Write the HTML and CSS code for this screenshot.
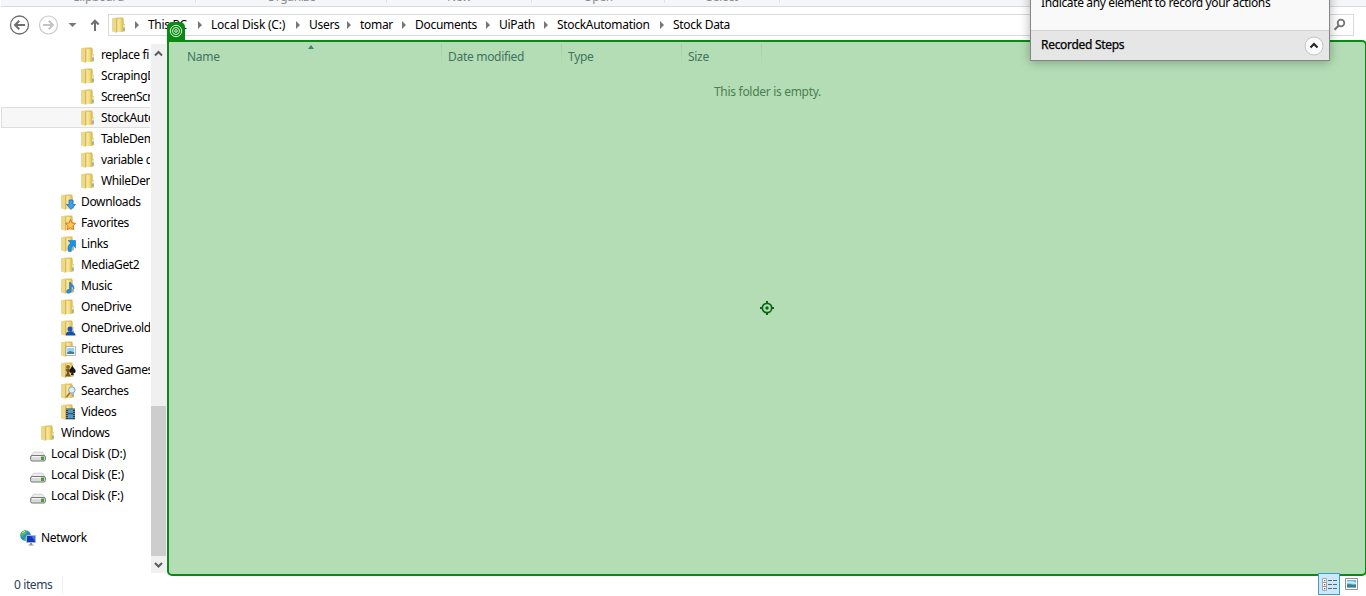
FILE: index.html
```html
<!DOCTYPE html>
<html lang="en">
<head>
<meta charset="utf-8">
<title>Stock Data</title>
<link rel="stylesheet" href="styles.css">
</head>
<body>
<svg class="defs" width="0" height="0">
  <defs>
    <linearGradient id="fg" x1="0" x2="1"><stop offset="0" stop-color="#fbedaa"/><stop offset=".5" stop-color="#f1dc7c"/><stop offset="1" stop-color="#d3b145"/></linearGradient>
    <linearGradient id="fb" x1="0" x2="1"><stop offset="0" stop-color="#f0dc8c"/><stop offset="1" stop-color="#d8ba58"/></linearGradient>
    <symbol id="folder" viewBox="0 0 16 16">
      <path d="M1 1.200 5.500.5H12.300V14.500H1Z" fill="url(#fb)"/>
      <path d="M1 1.500 5 2.200V15.700L1 14.300Z" fill="#ecd88c"/>
      <path d="M5 2.200 6.500 1.500V15L5 15.700Z" fill="#d6b95a"/>
      <path d="M6.500 2H12.500V14.800H6.500Z" fill="url(#fg)"/>
      <path d="M12.500 7h1.300v7.300l-1.300.5z" fill="#dfc670"/>
      <path d="M12.500 10.500h1v3.200h-1z" fill="#49a2d8"/>
      <path d="M12.500 8h1v2.500h-1z" fill="#f5f5ef"/>
    </symbol>
    <symbol id="drive" viewBox="0 0 16 16">
      <path d="M3.500 5.200h9l2.500 4H1Z" fill="#eee" stroke="#c0c0c0" stroke-width=".7"/>
      <rect x=".6" y="8.500" width="14.800" height="5.500" rx="1.500" fill="#d9d9d9" stroke="#777" stroke-width="1"/>
      <path d="M2 9.600h9" stroke="#f8f8f8"/>
      <rect x="11" y="9.700" width="3" height="3.300" fill="#3ca52a"/>
    </symbol>
  </defs>
</svg>
<div class="window">
  <div class="ribbon">
    <span class="g1">Clipboard</span><span class="g2">Organize</span><span class="g3">New</span><span class="g4">Open</span><span class="g5">Select</span>
  </div>
  <div class="toolbar">
    <svg class="navbtns" width="108" height="34" viewBox="0 0 108 34" fill="none">
      <circle cx="19.500" cy="18" r="9" stroke="#6d6d6d" stroke-width="1.300"/>
      <path d="M25 18H15.500M19.300 13.700 15 18l4.300 4.300" stroke="#6d6d6d" stroke-width="2"/>
      <circle cx="48.500" cy="18" r="9" stroke="#c9c9c9" stroke-width="1.200"/>
      <path d="M43 18h9.500M48.700 13.700 53 18l-4.300 4.300" stroke="#c4c4c4" stroke-width="2"/>
      <path d="M68.500 16h8l-4 4z" fill="#777"/>
      <path d="M95 24V14M91.300 17.500 95 13.700l3.700 3.800" stroke="#707070" stroke-width="2"/>
    </svg>
    <div class="address">
      <svg class="ic" width="16" height="16"><use href="#folder"/></svg>
      <div class="crumbs"><span>This PC</span><span class="drv">Local Disk (C:)</span><span>Users</span><span>tomar</span><span>Documents</span><span>UiPath</span><span>StockAutomation</span><span>Stock Data</span></div>
    </div>
    <div class="search"><svg width="14" height="14" viewBox="0 0 14 14" fill="none" stroke="#747474"><circle cx="8" cy="5" r="3.300" stroke-width="1.800"/><path d="M5.700 7.500 1.500 11.700" stroke-width="2"/></svg></div>
  </div>
  <div class="main">
    <div class="tree">
      <div class="row l3"><svg class="ic"><use href="#folder"/></svg><span>replace fi</span></div>
      <div class="row l3"><svg class="ic"><use href="#folder"/></svg><span>ScrapingD</span></div>
      <div class="row l3"><svg class="ic"><use href="#folder"/></svg><span class="tight">ScreenScr</span></div>
      <div class="row l3 sel"><svg class="ic"><use href="#folder"/></svg><span>StockAuto</span></div>
      <div class="row l3"><svg class="ic"><use href="#folder"/></svg><span>TableDem</span></div>
      <div class="row l3"><svg class="ic"><use href="#folder"/></svg><span>variable d</span></div>
      <div class="row l3"><svg class="ic"><use href="#folder"/></svg><span>WhileDem</span></div>
      <div class="row l2"><svg class="ic" viewBox="0 0 16 16"><use href="#folder"/><path d="M9 6h4v4.500h2.500L11 15.500 6.500 10.500H9Z" fill="#3ba0ef" stroke="#1767b8" stroke-width=".7"/></svg><span>Downloads</span></div>
      <div class="row l2"><svg class="ic" viewBox="0 0 16 16"><use href="#folder"/><path d="m10.500 4.500 1.500 3.500 3.700.3-2.800 2.500.9 3.900-3.300-2-3.300 2 .9-3.900L5.500 8.300 9 8Z" fill="#ffc850" stroke="#e6681c" stroke-width=".9"/></svg><span>Favorites</span></div>
      <div class="row l2"><svg class="ic" viewBox="0 0 16 16"><use href="#folder"/><path d="M8 4.500h7.700V12l-2.400-2.300c-2 1.300-2.500 3-2 5.800H8.500C7.200 12 8 9.300 10.600 7Z" fill="#1793e8" stroke="#0f69b5" stroke-width=".5"/></svg><span>Links</span></div>
      <div class="row l2"><svg class="ic"><use href="#folder"/></svg><span>MediaGet2</span></div>
      <div class="row l2"><svg class="ic" viewBox="0 0 16 16"><use href="#folder"/><path d="M9.500 4.500h1.300c.2 2 3.700 2.500 3.200 6.500-.9-2-1.700-2.500-2.800-2.700v5c-.5 2.500-5 2.600-4.700.2.200-1.700 1.800-2.200 3-1.800Z" fill="#268be0" stroke="#1567ad" stroke-width=".5"/></svg><span>Music</span></div>
      <div class="row l2"><svg class="ic"><use href="#folder"/></svg><span>OneDrive</span></div>
      <div class="row l2"><svg class="ic" viewBox="0 0 16 16"><use href="#folder"/><circle cx="10" cy="9" r="2.500" fill="#1c56b8"/><path d="M6 15.500c-.5-3 1.500-4.500 4-4 1-.7 2.800 0 3 1 1.700 0 2.700 1.500 2.500 3Z" fill="#164fa9"/></svg><span>OneDrive.old</span></div>
      <div class="row l2"><svg class="ic" viewBox="0 0 16 16"><use href="#folder"/><path d="M6 5.500h9.500v9H6z" fill="#fff" stroke="#999" stroke-width=".7"/><path d="M7.200 7h7v6h-7z" fill="#8fd1f0"/><path d="M7.200 11.500 10 10l4.200 1.200V13h-7z" fill="#447c92"/></svg><span>Pictures</span></div>
      <div class="row l2"><svg class="ic" viewBox="0 0 16 16"><use href="#folder"/><circle cx="8" cy="5" r="2" fill="#8b672c"/><path d="M5.500 7h4.500L9 11l1.800 3.500H5L7 11Z" fill="#775622"/><path d="M12.300 3.500c.7 2.300 3.500 3.500 3.400 5.700-.1 1.700-1.700 2.300-2.900 1.300l1 2.500h-3l.8-2.500c-1.500.6-2.500-.2-2.300-1.700.3-1.900 2.500-3.100 3-5.300Z" fill="#171717"/></svg><span>Saved Games</span></div>
      <div class="row l2"><svg class="ic" viewBox="0 0 16 16"><use href="#folder"/><path d="m10 9.500-3.500 4.800" stroke="#99723d" stroke-width="1.700"/><circle cx="11.800" cy="7" r="3.200" fill="#d9effb" stroke="#8f9fae"/></svg><span>Searches</span></div>
      <div class="row l2"><svg class="ic" viewBox="0 0 16 16"><use href="#folder"/><path d="M6 4.500h9v10.800H6z" fill="#303c45"/><path d="M8 5.200h5v4H8zM8 10.300h5v4H8z" fill="#499ed2"/><path d="M7 5v10M14 5v10" stroke="#e8e8e8" stroke-width=".8" stroke-dasharray="1 1"/></svg><span>Videos</span></div>
      <div class="row l1"><svg class="ic"><use href="#folder"/></svg><span>Windows</span></div>
      <div class="row disk"><svg class="ic"><use href="#drive"/></svg><span>Local Disk (D:)</span></div>
      <div class="row disk"><svg class="ic"><use href="#drive"/></svg><span>Local Disk (E:)</span></div>
      <div class="row disk"><svg class="ic"><use href="#drive"/></svg><span>Local Disk (F:)</span></div>
      <div class="row"></div>
      <div class="row net"><svg class="ic" viewBox="0 0 16 16"><circle cx="5.500" cy="5.500" r="5.300" fill="#278bd1"/><path d="M1 3C3 0 6 0 7 1L6 4 3.500 5 3 7 .5 6ZM5 7l3-1 1 2-3 3-2-1Z" fill="#54b956"/><path d="M2.500 2.500 5 1.500" stroke="#d6f4de"/><path d="M6.500 5.500h9v7h-9z" fill="#1238bb" stroke="#aeb8cb"/><path d="M11 6h4v5z" fill="#3e72e8"/><path d="M10 13h2v1.500h1.500v1h-5v-1H10Z" fill="#8994a5"/></svg><span>Network</span></div>
    </div>
    <div class="scroll">
      <svg width="15" height="17" viewBox="0 0 15 17" fill="none"><path d="m4 11.500 3.500-3.500L11 11.500" stroke="#5c5c5c" stroke-width="2"/></svg>
      <div class="thumb"></div>
      <svg width="15" height="17" viewBox="0 0 15 17" fill="none"><path d="m4 7 3.500 3.500L11 7" stroke="#5c5c5c" stroke-width="2"/></svg>
    </div>
    <div class="content">
      <div class="badge"><svg width="14" height="14" viewBox="0 0 14 14" fill="none" stroke="#d9f3d9"><circle cx="7" cy="7" r="5.700"/><circle cx="7" cy="7" r="3.500"/><circle cx="7" cy="7" r="1.300"/></svg></div>
      <div class="cols"><div class="c1">Name<svg class="sort" width="6" height="4"><path d="M0 4 3 0l3 4z" fill="#37866f"/></svg></div><div>Date modified</div><div>Type</div><div>Size</div></div>
      <div class="empty"><span>This folder is empty.</span></div>
      <svg class="target" width="14" height="14" viewBox="0 0 14 14" fill="none" stroke="#08680e"><circle cx="7" cy="7" r="4.700" stroke-width="1.700"/><path d="M7 0v3M7 11v3M0 7h3M11 7h3" stroke-width="2"/><circle cx="7" cy="7" r="1.700" fill="#08680e" stroke="none"/></svg>
    </div>
  </div>
  <div class="status"><span class="count">0 items</span>
    <div class="views">
      <div class="details"><svg width="16" height="14" viewBox="0 0 16 14"><path d="M.5.500h4v4h-4zM.5 4.500h4v4h-4zM.5 8.500h4v4h-4z" fill="#fff" stroke="#90959b" stroke-width=".8"/><path d="M2 2h1.300v1.300H2z" fill="#2c9c47"/><path d="M2 6h1.300v1.300H2z" fill="#e02020"/><path d="M2 10h1.300v1.300H2z" fill="#2461d8"/><path d="M6 2.500h4M11 2.500h4M6 6.500h4M11 6.500h4M6 10.500h4M11 10.500h4" stroke="#536b7b"/></svg></div>
      <svg class="large" width="14" height="12" viewBox="0 0 14 12"><path d="M.5.500h12v11H.5z" fill="#fff" stroke="#8c939c"/><path d="M2 2h9v7.500H2z" fill="#73bdea"/><path d="M2 6.500c4-1 5 1 9 0v3H2z" fill="#3c7f8c"/><path d="M2 3.500h6l3 1.500v1L2 5z" fill="#d9f1fc"/></svg>
    </div>
  </div>
  <div class="recorder">
    <div class="hint">Indicate any element to record your actions</div>
    <div class="steps"><span>Recorded Steps</span><svg width="20" height="20" viewBox="0 0 20 20" fill="none"><circle cx="10" cy="10" r="9" fill="#fafafa" stroke="#c5c5c5"/><path d="M6.500 11.500 10 8l3.500 3.500" stroke="#222" stroke-width="2"/></svg></div>
  </div>
</div>
</body>
</html>
```
FILE: styles.css
```css
* { box-sizing: border-box; }
body { margin: 0; background: #fff; overflow: hidden; font: 12px/20px "Noto Sans", "Open Sans", sans-serif; color: #000; letter-spacing: -0.3px; }
svg { display: block; flex: none; }
.defs { position: absolute; }
.window { position: relative; width: 1366px; height: 596px; display: flex; flex-direction: column; overflow: hidden; }
.ribbon { height: 7px; flex: none; display: flex; margin-left: 1px; background: #f5f6f7; border-bottom: 1px solid #dadbdc; overflow: hidden; color: #8b8b8b; }
.ribbon span { height: 16px; margin-top: -13px; border-right: 1px solid #e0e1e2; text-align: center; line-height: 20px; }
.g1 { width: 195px; } .g2 { width: 191px; } .g3 { width: 145px; } .g4 { width: 133px; } .g5 { width: 115px; }
.toolbar { height: 33px; flex: none; display: flex; align-items: flex-start; }
.navbtns { width: 108px; }
.address { width: 1132px; height: 22px; margin-top: 7px; border: 1px solid #d9d9d9; display: flex; align-items: center; padding-left: 2px; }
.ic { width: 16px; height: 16px; }
.crumbs { display: grid; grid-template-columns: 63px 98px 51px 55px 84px 58px 116px 80px; margin-left: 21px; }
.crumbs span { position: relative; white-space: nowrap; }
.crumbs .drv { letter-spacing: -0.22px; }
.crumbs span::before { content: ""; position: absolute; left: -13px; top: 6px; border: 4px solid transparent; border-left-color: #777; border-right: 0; }
.search { width: 108px; height: 22px; margin: 7px 0 0 6px; border: 1px solid #d9d9d9; display: flex; justify-content: flex-end; align-items: center; padding-right: 6px; }
.main { height: 536px; flex: none; display: flex; }
.tree { width: 151px; flex: none; padding-top: 4px; letter-spacing: -0.36px; }
.row { height: 21px; width: 150px; display: flex; align-items: center; gap: 5px; overflow: hidden; white-space: nowrap; }
.l3 { padding-left: 80px; } .l2 { padding-left: 60px; } .l1 { padding-left: 40px; }
.disk { padding-left: 30px; letter-spacing: -0.25px; }
.net { padding-left: 20px; }
.tight { letter-spacing: -0.5px; }
.disk .ic { margin-top: 2px; }
.l3.sel { margin-left: 1px; width: 149px; padding-left: 78px; background: #f7f7f7; border: 1px solid #dedede; border-right: 0; }
.scroll { width: 15px; flex: none; height: 529px; margin-top: 4px; background: #f0f0f0; display: flex; flex-direction: column; }
.thumb { height: 150px; margin-top: auto; background: #cdcdcd; }
.content { position: relative; flex: none; width: 1200px; height: 536px; margin-left: 1px; border: 2px solid #078b12; border-radius: 5px; border-top-left-radius: 0; background: #b4ddb5; }
.badge { position: absolute; left: -2px; top: -20px; width: 18px; height: 20px; background: #078b12; border-radius: 5px 5px 0 0; padding: 2px; }
.cols { display: grid; grid-template-columns: 273px 120px 120px 80px; height: 22px; margin-top: 2px; color: #3f735f; }
.cols div { position: relative; padding: 3px 0 0 6px; border-right: 1px solid; border-image: linear-gradient(#9bcfb0, #b4ddb5) 1; line-height: 20px; white-space: nowrap; }
.cols .c1 { padding-left: 18px; }
.sort { position: absolute; left: 139px; top: 1px; }
.empty { display: flex; justify-content: center; margin-top: 16px; padding-left: 1px; color: #4b7e51; }
.target { position: absolute; left: 591px; top: 259px; }
.status { height: 20px; flex: none; display: flex; justify-content: space-between; padding-left: 14px; color: #2a3d5c; line-height: 18px; }
.count { width: 49px; height: 18px; border-right: 1px solid #f0f0f0; letter-spacing: -0.4px; }
.views { display: flex; width: 48px; gap: 5px; }
.details { position: relative; width: 22px; height: 22px; margin-top: -3px; border: 1px solid #379ed5; background: #cfe8f7; padding: 4px 3px; }
.large { margin-top: 2px; }
.recorder { position: absolute; left: 1030px; top: -40px; width: 300px; height: 101px; border: 1px solid #858585; background: #f9f9f9; box-shadow: 0 1px 10px rgba(0,0,0,.3); }
.hint { height: 69px; padding: 32px 10px 0; letter-spacing: -0.37px; white-space: nowrap; }
.steps { height: 30px; border-top: 1px solid #d2d2d2; background: #e6e6e6; display: flex; align-items: center; justify-content: space-between; padding: 0 5px 0 10px; }
.steps span { margin-top: -2px; -webkit-text-stroke: .25px #000; }
```
